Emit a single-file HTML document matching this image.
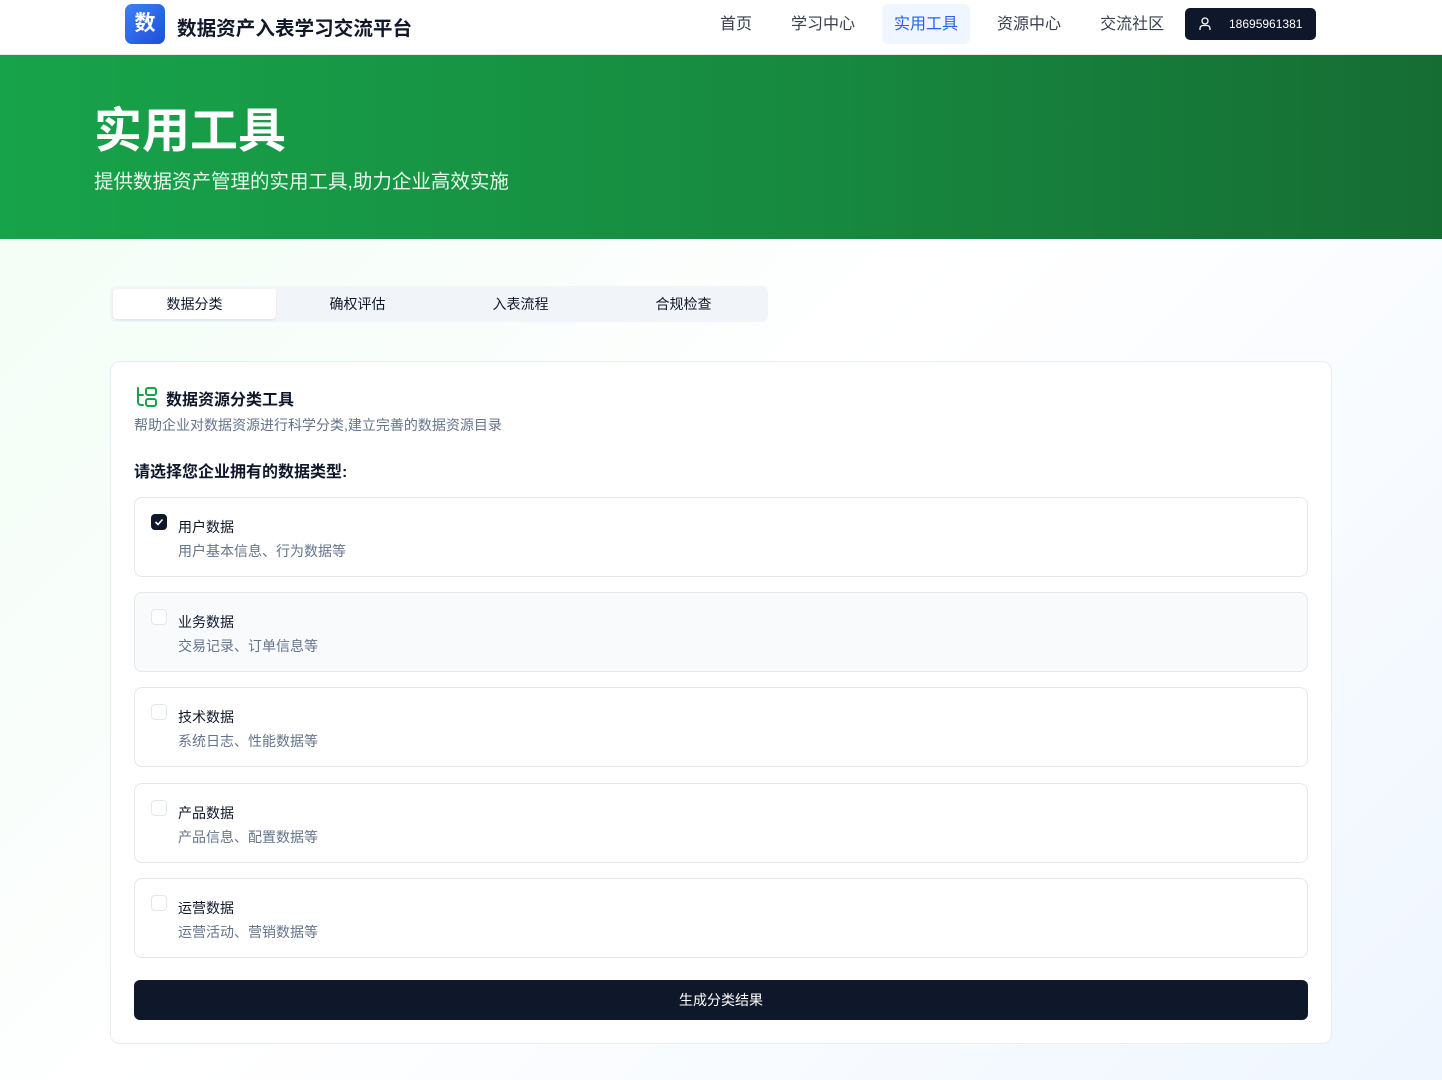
<!DOCTYPE html>
<html><head><meta charset="utf-8"><style>
*{box-sizing:border-box;margin:0;padding:0}
body{width:1442px;height:1080px;overflow:hidden;font-family:"Liberation Sans","Noto Sans CJK SC",sans-serif;background:linear-gradient(135deg,#f0fdf4 0%,#ffffff 50%,#eff6ff 100%);color:#0f172a}
.nav{height:55px;background:#fff;border-bottom:1px solid #e5e7eb;position:relative}
.logo{position:absolute;left:125px;top:4px;width:40px;height:40px;border-radius:7px;background:linear-gradient(135deg,#3b82f6,#1d4ed8);color:#fff;font-weight:700;font-size:21px;text-align:center;line-height:40px}
.brand{position:absolute;left:177px;top:12px;font-size:19.6px;font-weight:700;color:#111827}
.menu{position:absolute;top:4px;left:708px;display:flex}
.menu a{display:block;height:40px;line-height:42px;font-size:16px;color:#374151;padding:0 12px;margin-right:15px;border-radius:6px}
.menu a.on{background:#eff6ff;color:#2563eb}
.user{position:absolute;left:1185px;top:8px;width:131px;height:32px;border-radius:5px;background:#0f172a;color:#fff;font-size:12px;line-height:32px;padding-left:44px}
.user svg{position:absolute;left:14px;top:9px}
.hero{height:184px;background:linear-gradient(90deg,#17a34a 0%,#178a40 55%,#166d34 100%);position:relative;color:#fff}
.hero h1{position:absolute;left:94px;top:36px;font-size:48px;font-weight:700;letter-spacing:0}
.hero p{position:absolute;left:94px;top:110px;font-size:19.5px;color:#e6f7ec}
.tabs{position:absolute;left:110px;top:286px;width:658px;height:36px;background:#f1f5f9;border-radius:6px;padding:3px;display:flex}
.tabs div{flex:1;text-align:center;font-size:14px;line-height:31px;color:#0f172a;border-radius:4px}
.tabs .on{background:#fff;box-shadow:0 1px 2px rgba(0,0,0,.08)}
.card{position:absolute;left:110px;top:361px;width:1222px;height:683px;background:#fff;border:1px solid #e8edf2;border-radius:10px}
.t{position:absolute;left:55px;top:24px;font-size:16px;font-weight:700}
.ico{position:absolute;left:25px;top:25px}
.sub{position:absolute;left:23px;top:53px;font-size:14px;color:#64748b}
.q{position:absolute;left:23px;top:96px;font-size:16px;font-weight:700}
.opt{position:absolute;left:23px;width:1174px;height:80px;border:1px solid #e5e7eb;border-radius:8px}
.opt.g{background:#f8fafc}
.cb{position:absolute;left:16px;top:16px;width:16px;height:16px;border:1px solid #e2e8f0;border-radius:4px;background:#fff}
.cb.c{background:#0f172a;border-color:#0f172a}
.opt b{position:absolute;left:43px;top:19px;font-size:14px;font-weight:400;color:#0f172a}
.opt span{position:absolute;left:43px;top:43px;font-size:14px;color:#64748b}
.btn{position:absolute;left:23px;top:618px;width:1174px;height:40px;background:#0f172a;border-radius:6px;color:#fff;font-size:14px;text-align:center;line-height:40px}
</style></head><body>
<div class="nav">
<div class="logo">数</div><div class="brand">数据资产入表学习交流平台</div>
<div class="menu"><a>首页</a><a>学习中心</a><a class="on">实用工具</a><a>资源中心</a><a>交流社区</a></div>
<div class="user"><svg width="12" height="14" viewBox="0 0 12 14" fill="none" stroke="#fff" stroke-width="1.3"><circle cx="6" cy="4" r="3"/><path d="M1 13v-1.5a3 3 0 0 1 3-3h4a3 3 0 0 1 3 3V13"/></svg>18695961381</div>
</div>
<div class="hero"><h1>实用工具</h1><p>提供数据资产管理的实用工具,助力企业高效实施</p></div>
<div class="tabs"><div class="on">数据分类</div><div>确权评估</div><div>入表流程</div><div>合规检查</div></div>
<div class="card">
<svg class="ico" width="22" height="20" viewBox="0 0 22 20" fill="none" stroke="#16a34a" stroke-width="2" stroke-linecap="round"><path d="M2 1v14a3 3 0 0 0 3 3h2"/><path d="M2 8h5"/><rect x="10" y="1" width="10" height="7" rx="2"/><rect x="10" y="12" width="10" height="7" rx="2"/></svg>
<div class="t">数据资源分类工具</div>
<div class="sub">帮助企业对数据资源进行科学分类,建立完善的数据资源目录</div>
<div class="q">请选择您企业拥有的数据类型:</div>
<div class="opt" style="top:135px"><div class="cb c"><svg width="14" height="14" viewBox="0 0 14 14" fill="none" stroke="#fff" stroke-width="1.6"><path d="M3.5 7l2.5 2.5 4.5-5"/></svg></div><b>用户数据</b><span>用户基本信息、行为数据等</span></div>
<div class="opt g" style="top:230px"><div class="cb"></div><b>业务数据</b><span>交易记录、订单信息等</span></div>
<div class="opt" style="top:325px"><div class="cb"></div><b>技术数据</b><span>系统日志、性能数据等</span></div>
<div class="opt" style="top:421px"><div class="cb"></div><b>产品数据</b><span>产品信息、配置数据等</span></div>
<div class="opt" style="top:516px"><div class="cb"></div><b>运营数据</b><span>运营活动、营销数据等</span></div>
<div class="btn">生成分类结果</div>
</div>
</body></html>
